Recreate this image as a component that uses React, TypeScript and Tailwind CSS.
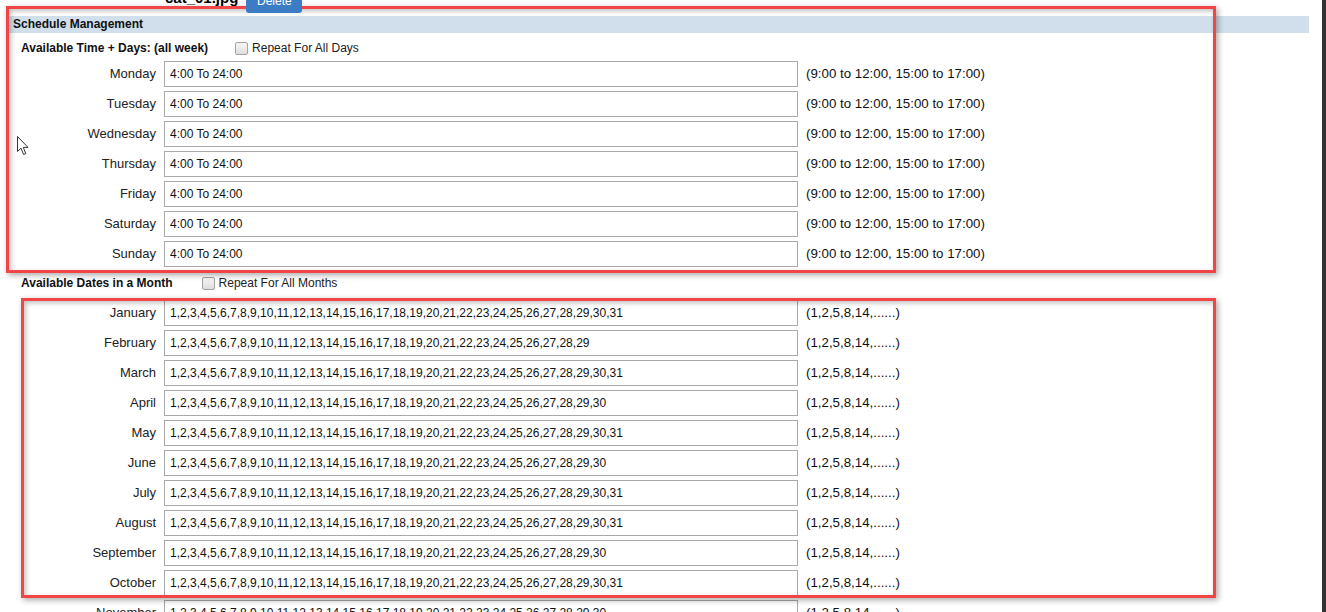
import React from "react";

const days = ["Monday", "Tuesday", "Wednesday", "Thursday", "Friday", "Saturday", "Sunday"];

const months: [string, number][] = [
  ["January", 31],
  ["February", 29],
  ["March", 31],
  ["April", 30],
  ["May", 31],
  ["June", 30],
  ["July", 31],
  ["August", 31],
  ["September", 30],
  ["October", 31],
  ["November", 30],
];

function dates(n: number) {
  return Array.from({ length: n }, (_, i) => i + 1).join(",");
}

function Checkbox() {
  return (
    <span className="inline-block w-[13px] h-[13px] rounded-[2px] border border-[#a3a3a3] bg-gradient-to-b from-[#f6f6f6] to-[#dedede]" />
  );
}

function Row({ label, value, hint }: { label: string; value: string; hint: string }) {
  return (
    <div className="h-[30px] flex items-center">
      <div className="w-[148px] text-right text-[13px] text-[#222]">{label}</div>
      <input
        readOnly
        value={value}
        className="ml-[8px] w-[634px] h-[26px] border border-[#a9a9a9] px-[5px] text-[12px] text-[#111] bg-white outline-none font-['Liberation_Sans',Arial,sans-serif]"
      />
      <div className="ml-[8px] text-[13.3px] text-[#111]">{hint}</div>
    </div>
  );
}

function Annotation({ className }: { className: string }) {
  return (
    <div
      className={
        "absolute border-[3px] border-[#f24545] shadow-[2px_2px_6px_rgba(0,0,0,0.35),inset_2px_2px_5px_rgba(0,0,0,0.25)] pointer-events-none " +
        className
      }
    />
  );
}

export default function App() {
  return (
    <div className="relative w-[1326px] h-[612px] overflow-hidden bg-white flex font-['Liberation_Sans',Arial,sans-serif]">
      <div className="flex-1 pl-[8px] pr-[13px]">
        {/* file title + delete, scrolled mostly off screen */}
        <div className="relative z-10 h-[16px] flex items-start pl-[157px]">
          <div className="-mt-[12px] flex items-start">
            <span className="text-[15px] font-bold text-black leading-[20px]">cat_01.jpg</span>
            <span className="ml-[8px] w-[56px] h-[25px] rounded-b-[3px] bg-[#3b7dc4] text-white text-[12px] flex items-center justify-center">
              Delete
            </span>
          </div>
        </div>

        <div className="h-[17px] bg-[#d0dfeb] text-[12px] font-bold leading-[17px] pl-[5px] text-[#111]">
          Schedule Management
        </div>

        <div className="mt-[4px] h-[22px] flex items-center pl-[13px] text-[12px]">
          <span className="font-bold text-[#111]">Available Time + Days: (all week)</span>
          <span className="ml-[27px] flex items-center">
            <Checkbox />
          </span>
          <span className="ml-[4px] text-[#222]">Repeat For All Days</span>
        </div>

        {days.map((d) => (
          <Row key={d} label={d} value="4:00 To 24:00" hint="(9:00 to 12:00, 15:00 to 17:00)" />
        ))}

        <div className="mt-[3px] h-[22px] flex items-center pl-[13px] text-[12px]">
          <span className="font-bold text-[#111]">Available Dates in a Month</span>
          <span className="ml-[29px] flex items-center">
            <Checkbox />
          </span>
          <span className="ml-[4px] text-[#222]">Repeat For All Months</span>
        </div>

        <div className="mt-[4px]">
          {months.map(([m, n]) => (
            <Row key={m} label={m} value={dates(n)} hint="(1,2,5,8,14,......)" />
          ))}
        </div>
      </div>
      <div className="w-[4px] bg-[#333]" />

      <Annotation className="left-[6px] top-[6px] w-[1210px] h-[267px]" />
      <Annotation className="left-[21px] top-[298px] w-[1195px] h-[300px]" />

      {/* mouse pointer */}
      <svg className="absolute left-[17px] top-[136px]" width="13" height="20" viewBox="0 0 13 20">
        <path
          d="M0.5 0.5 L0.5 15.5 L4 12.2 L6.6 18.5 L8.8 17.6 L6.3 11.4 L11 11.4 Z"
          fill="white"
          stroke="#333"
          strokeWidth="1"
          strokeLinejoin="round"
        />
      </svg>
    </div>
  );
}
